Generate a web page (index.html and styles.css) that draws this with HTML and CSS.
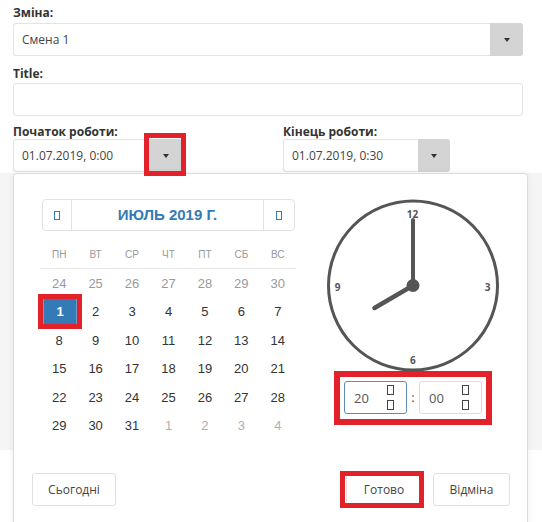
FILE: index.html
```html
<!DOCTYPE html>
<html>
<head>
<meta charset="utf-8">
<link rel="stylesheet" href="styles.css">
</head>
<body>
<div class="backdrop"></div>
<div class="page">
  <div class="group g1">
    <label class="lbl">Зміна:</label>
    <div class="combo">
      <div class="field">Смена 1</div>
      <div class="btn-dd"><span class="caret"></span></div>
    </div>
  </div>
  <div class="group g2">
    <label class="lbl">Title:</label>
    <div class="input"></div>
  </div>
  <div class="row">
    <div class="col col-start">
      <label class="lbl lbl-tight">Початок роботи:</label>
      <div class="combo combo-start">
        <div class="field">01.07.2019, 0:00</div>
        <div class="btn-dd"><span class="caret"></span><span class="mark mark-start"></span></div>
      </div>
    </div>
    <div class="col col-end">
      <label class="lbl lbl-tight">Кінець роботи:</label>
      <div class="combo combo-end">
        <div class="field">01.07.2019, 0:30</div>
        <div class="btn-dd"><span class="caret"></span></div>
      </div>
    </div>
  </div>
  <div class="popup">
    <div class="popup-body">
      <div class="cal">
        <div class="nav">
          <div class="nav-btn prev"><span class="tofu"></span></div>
          <div class="nav-title">ИЮЛЬ 2019 Г.</div>
          <div class="nav-btn next"><span class="tofu"></span></div>
        </div>
        <div class="grid">
          <div class="wd">ПН</div><div class="wd">ВТ</div><div class="wd">СР</div><div class="wd">ЧТ</div><div class="wd">ПТ</div><div class="wd">СБ</div><div class="wd">ВС</div>
          <div class="day prev-m">24</div><div class="day prev-m">25</div><div class="day prev-m">26</div><div class="day prev-m">27</div><div class="day prev-m">28</div><div class="day prev-m">29</div><div class="day prev-m">30</div>
          <div class="day sel">1<span class="mark mark-day"></span></div><div class="day">2</div><div class="day">3</div><div class="day">4</div><div class="day">5</div><div class="day">6</div><div class="day">7</div>
          <div class="day">8</div><div class="day">9</div><div class="day">10</div><div class="day">11</div><div class="day">12</div><div class="day">13</div><div class="day">14</div>
          <div class="day">15</div><div class="day">16</div><div class="day">17</div><div class="day">18</div><div class="day">19</div><div class="day">20</div><div class="day">21</div>
          <div class="day">22</div><div class="day">23</div><div class="day">24</div><div class="day">25</div><div class="day">26</div><div class="day">27</div><div class="day">28</div>
          <div class="day">29</div><div class="day">30</div><div class="day">31</div><div class="day next-m">1</div><div class="day next-m">2</div><div class="day next-m">3</div><div class="day next-m">4</div>
        </div>
      </div>
      <div class="clockcol">
        <svg class="clock" width="176" height="176" viewBox="0 0 176 176">
          <circle cx="88" cy="88.5" r="84.5" fill="none" stroke="#555" stroke-width="3"/>
          <text x="87.5" y="16.5" class="num">12</text>
          <text x="12.5" y="89.5" class="num">9</text>
          <text x="162.5" y="89.5" class="num">3</text>
          <text x="87.8" y="162.5" class="num">6</text>
          <line x1="88" y1="88.5" x2="88" y2="23" stroke="#555" stroke-width="4" stroke-linecap="round"/>
          <line x1="88" y1="88.5" x2="49.5" y2="111" stroke="#555" stroke-width="4.5" stroke-linecap="round"/>
          <circle cx="88" cy="88.5" r="6.5" fill="#555"/>
        </svg>
        <div class="time">
          <div class="tinput focus"><span class="tval">20</span><span class="spin"><span class="sbox"></span><span class="sbox"></span></span></div>
          <div class="colon">:</div>
          <div class="tinput"><span class="tval">00</span><span class="spin"><span class="sbox"></span><span class="sbox"></span></span></div>
          <span class="mark mark-time"></span>
        </div>
      </div>
    </div>
    <div class="footer">
      <div class="btn btn-today">Сьогодні</div>
      <div class="right">
        <div class="btn btn-ok">Готово<span class="mark mark-ok"></span></div>
        <div class="btn btn-cancel">Відміна</div>
      </div>
    </div>
  </div>
</div>
</body>
</html>
```
FILE: styles.css
```css
html, body {
  margin: 0;
  padding: 0;
}
body {
  width: 542px;
  height: 522px;
  overflow: hidden;
  position: relative;
  background: #fff;
  font-family: "Open Sans", "Liberation Sans", sans-serif;
  color: #333;
}
.backdrop {
  position: absolute;
  left: 0;
  top: 173px;
  width: 542px;
  height: 277px;
  background: #f5f5f5;
  z-index: 0;
}
.page {
  padding: 4px 19px 0 13px;
}
.lbl {
  display: block;
  font-weight: 700;
  font-size: 12px;
  line-height: 17px;
  margin-bottom: 2px;
  color: #333;
}
.lbl-tight {
  line-height: 14px;
  margin-bottom: 0;
}
.g1 { margin-bottom: 9px; }
.g2 { margin-bottom: 9px; }
.g2 .lbl { margin-bottom: 1px; }
.combo {
  display: flex;
  height: 33px;
  box-sizing: border-box;
}
.field {
  flex: 1;
  box-sizing: border-box;
  border: 1px solid #e3e3e3;
  border-right: 0;
  border-radius: 3px 0 0 3px;
  padding: 0 8px;
  font-size: 12px;
  line-height: 31px;
  color: #444;
  white-space: nowrap;
}
.btn-dd {
  width: 33px;
  background: #d4d4d4;
  border-radius: 0 3px 3px 0;
  display: flex;
  align-items: center;
  justify-content: center;
  position: relative;
}
.caret {
  width: 0;
  height: 0;
  border-top: 4px solid #333;
  border-left: 3.5px solid transparent;
  border-right: 3.5px solid transparent;
}
.input {
  height: 33px;
  box-sizing: border-box;
  border: 1px solid #e3e3e3;
  border-radius: 3px;
}
.row {
  display: flex;
}
.col-start { width: 270px; }
.col-end { flex: 1; }
.combo-start { width: 169px; }
.combo-end { width: 167px; }
.combo-end .btn-dd { width: 32px; }

.mark {
  position: absolute;
  box-sizing: border-box;
  border: 5px solid #e3212a;
  pointer-events: none;
  z-index: 5;
}
.mark-start { left: -5px; right: -4px; top: -6px; bottom: -4px; }

.popup {
  position: relative;
  z-index: 1;
  margin-top: 1px;
  width: 515px;
  height: 370px;
  box-sizing: border-box;
  background: #fff;
  border: 1px solid #dcdcdc;
  border-radius: 4px;
  box-shadow: 0 0 7px rgba(0, 0, 0, 0.08);
}
.popup-body {
  display: flex;
  padding: 25px 0 0 27px;
}
.cal {
  width: 255px;
  font-family: "Liberation Sans", Arial, sans-serif;
}
.nav {
  display: flex;
  height: 32px;
  margin: 0 1px;
  box-sizing: border-box;
  border: 1px solid #e2e2e2;
  border-radius: 4px;
}
.nav-btn {
  width: 28px;
  display: flex;
  align-items: center;
  justify-content: center;
}
.nav-btn.prev { border-right: 1px solid #e2e2e2; }
.nav-btn.next { border-left: 1px solid #e2e2e2; width: 30px; }
.tofu {
  width: 4px;
  height: 7px;
  border: 1px solid #337ab7;
}
.nav-title {
  flex: 1;
  text-align: center;
  line-height: 30px;
  font-weight: 700;
  font-size: 15px;
  color: #337ab7;
}
.grid {
  display: grid;
  grid-template-columns: repeat(7, 1fr);
  margin-top: 10px;
}
.wd {
  height: 28px;
  box-sizing: border-box;
  border-bottom: 1px solid #e6e6e6;
  text-align: center;
  line-height: 28px;
  font-size: 10px;
  color: #999;
}
.day {
  height: 28.5px;
  display: flex;
  align-items: center;
  justify-content: center;
  font-size: 13px;
  color: #333;
  position: relative;
}
.day.prev-m { color: #9a9a9a; }
.day.next-m { color: #b0b0b0; }
.day.sel {
  background: #337ab7;
  color: #fff;
  font-weight: 700;
  margin: 0 0 1px 2px;
  height: 27.5px;
  box-sizing: border-box;
  border: 1px solid #6f9cc6;
}
.mark-day { left: -6px; right: -6px; top: -5px; bottom: -5px; }

.clockcol {
  margin-left: 29px;
  display: flex;
  flex-direction: column;
  align-items: center;
  width: 176px;
}
.clock {
  display: block;
  margin-top: -2px;
}
.num {
  font-family: "Open Sans", sans-serif;
  font-weight: 700;
  font-size: 10px;
  fill: #555;
  text-anchor: middle;
  dominant-baseline: central;
}
.time {
  position: relative;
  display: flex;
  margin-top: 8px;
}
.tinput {
  width: 63px;
  height: 33px;
  box-sizing: border-box;
  border: 1px solid #dcdcdc;
  border-radius: 3px;
  display: flex;
  align-items: center;
  padding-left: 9px;
  font-size: 13px;
  color: #555;
}
.tinput.focus { border-color: #5f8cb6; }
.spin {
  margin-left: auto;
  margin-right: 12px;
  display: flex;
  flex-direction: column;
  gap: 5px;
}
.sbox {
  width: 5px;
  height: 8px;
  border: 1px solid #444;
}
.colon {
  width: 12px;
  text-align: center;
  line-height: 33px;
  font-size: 13px;
  color: #555;
}
.mark-time { left: -10px; right: -10px; top: -10px; bottom: -11px; border-width: 6px; }

.footer {
  display: flex;
  justify-content: space-between;
  padding: 33px 17px 0 18px;
}
.right {
  display: flex;
  gap: 11px;
}
.btn {
  position: relative;
  height: 33px;
  box-sizing: border-box;
  border: 1px solid #e0e0e0;
  border-radius: 3px;
  background: #fff;
  display: flex;
  align-items: center;
  justify-content: center;
  font-size: 12px;
  color: #444;
}
.btn-today { width: 84px; }
.btn-ok { width: 76px; }
.btn-cancel { width: 77px; }
.mark-ok { left: -7px; right: -3px; top: -3px; bottom: -3px; }
```
